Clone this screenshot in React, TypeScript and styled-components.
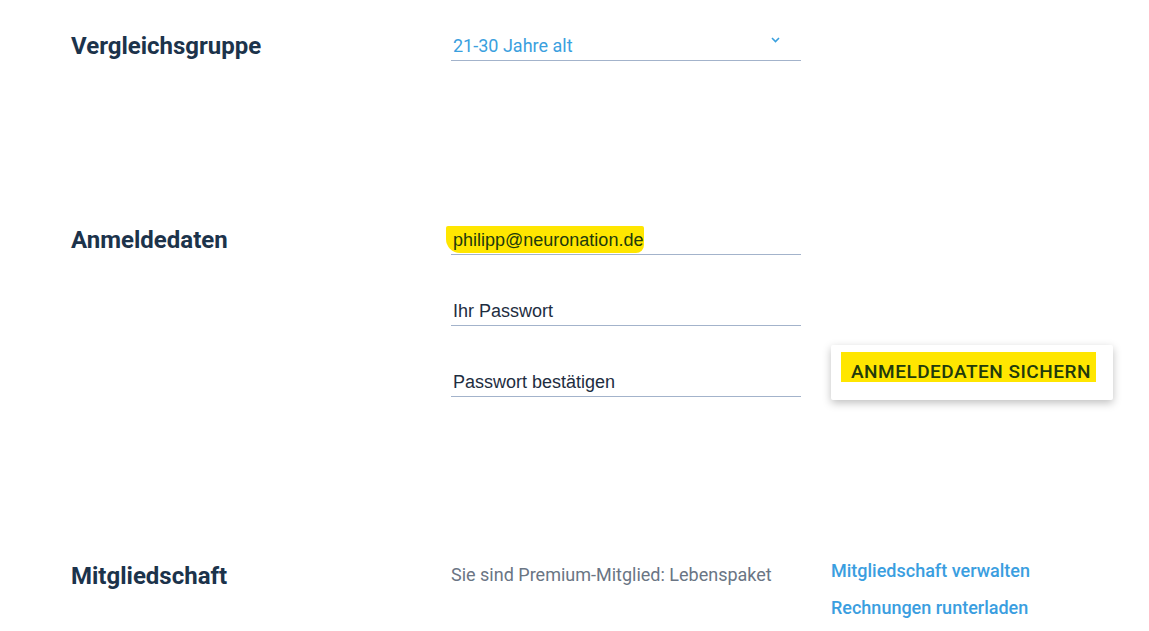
import React from "react";
import styled, { createGlobalStyle } from "styled-components";

const Global = createGlobalStyle`
  html, body { margin: 0; padding: 0; background: #ffffff; }
  body { font-family: Roboto, "Liberation Sans", sans-serif; }
`;

const Page = styled.div`
  padding: 30px 0 0 71px;
  width: 1149px;
  height: 631px;
  box-sizing: border-box;
  overflow: hidden;
`;

const Section = styled.section<{ $top: number }>`
  display: grid;
  grid-template-columns: 350px 350px auto;
  column-gap: 30px;
  row-gap: 40px;
  margin-top: ${(p) => p.$top}px;
  align-items: start;
`;

const Heading = styled.h2`
  grid-column: 1;
  grid-row: 1;
  margin: 1px 0 0;
  font-family: Roboto, sans-serif;
  font-weight: 700;
  font-size: 24px;
  line-height: 30px;
  color: #1c334b;
`;

const Field = styled.div<{ $row: number; $select?: boolean }>`
  grid-column: 2;
  grid-row: ${(p) => p.$row};
  position: relative;
  box-sizing: border-box;
  height: 31px;
  padding: 6px 2px 4px;
  border-bottom: 1px solid #a3b3cb;
  font-family: ${(p) => (p.$select ? "Roboto, sans-serif" : '"Liberation Sans", Arial, sans-serif')};
  font-size: 18px;
  line-height: 20px;
  color: ${(p) => (p.$select ? "#3aa0de" : "#1e2d3f")};
  white-space: nowrap;
`;

const Chevron = styled.svg`
  position: absolute;
  right: 21px;
  top: 7px;
`;

const Marker = styled.span`
  background: #ffe600;
  color: #213a0c;
  padding: 4px 1px 3px 7px;
  margin-left: -7px;
  border-radius: 2px 2px 8px 14px;
`;

const ButtonCell = styled.div`
  grid-column: 3;
  grid-row: 3;
  align-self: start;
  margin: -21px 0 -3px;
`;

const SaveButton = styled.button`
  display: flex;
  align-items: flex-start;
  width: 282px;
  height: 55px;
  border: none;
  background: #ffffff;
  border-radius: 2px;
  box-shadow: 0 3px 8px rgba(0, 0, 0, 0.25);
  padding: 7px 0 0 10px;
  font-family: Roboto, sans-serif;
  font-weight: 500;
  font-size: 19px;
  letter-spacing: 0.5px;
  text-transform: uppercase;
  color: #213a0c;
  cursor: pointer;
`;

const ButtonMark = styled.span`
  display: inline-block;
  background: #ffe600;
  padding: 9px 5px 0 10px;
  line-height: 21px;
  white-space: nowrap;
`;

const Plain = styled.div`
  grid-column: 2;
  grid-row: 1;
  margin-top: 4px;
  font-family: Roboto, sans-serif;
  font-size: 18px;
  line-height: 22px;
  color: #6a7584;
  white-space: nowrap;
`;

const Links = styled.div`
  grid-column: 3;
  grid-row: 1;
  display: flex;
  flex-direction: column;
  gap: 15px;
`;

const Link = styled.a`
  font-family: Roboto, sans-serif;
  font-weight: 500;
  font-size: 18px;
  line-height: 22px;
  color: #3a9ee0;
  text-decoration: none;
  white-space: nowrap;
`;

export default function App() {
  return (
    <Page>
      <Global />
      <Section $top={0}>
        <Heading>Vergleichsgruppe</Heading>
        <Field $row={1} $select>
          21-30 Jahre alt
          <Chevron width="9" height="6" viewBox="0 0 9 6">
            <path d="M1 1 L4.5 4.5 L8 1" fill="none" stroke="#3aa0de" strokeWidth="1.6" />
          </Chevron>
        </Field>
      </Section>

      <Section $top={163}>
        <Heading>Anmeldedaten</Heading>
        <Field $row={1}>
          <Marker>philipp@neuronation.de</Marker>
        </Field>
        <Field $row={2}>Ihr Passwort</Field>
        <Field $row={3}>Passwort bestätigen</Field>
        <ButtonCell>
          <SaveButton>
            <ButtonMark>Anmeldedaten sichern</ButtonMark>
          </SaveButton>
        </ButtonCell>
      </Section>

      <Section $top={163}>
        <Heading>Mitgliedschaft</Heading>
        <Plain>Sie sind Premium-Mitglied: Lebenspaket</Plain>
        <Links>
          <Link href="#">Mitgliedschaft verwalten</Link>
          <Link href="#">Rechnungen runterladen</Link>
        </Links>
      </Section>
    </Page>
  );
}
